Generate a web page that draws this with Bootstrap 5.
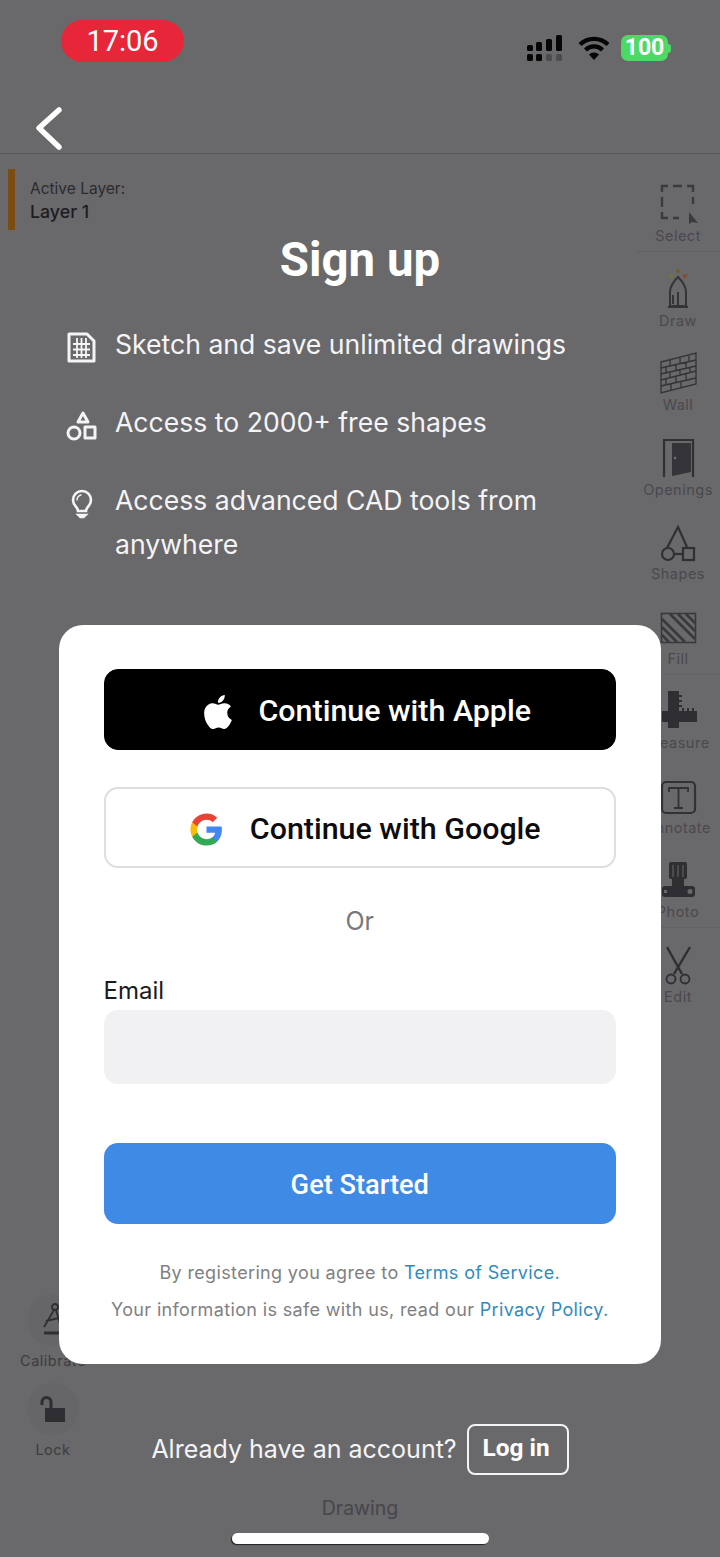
<!DOCTYPE html>
<html lang="en">
<head>
    <meta charset="UTF-8">
    <meta name="viewport" content="width=device-width, initial-scale=1.0">
    <title>Sign up</title>
    <link href="https://cdn.jsdelivr.net/npm/bootstrap@5.3.0/dist/css/bootstrap.min.css" rel="stylesheet">
    <style>
        body {
            margin: 0;
            background: #69686b;
            font-family: Inter, "Liberation Sans", sans-serif;
        }
        .phone-screen {
            position: relative;
            width: 720px;
            height: 1557px;
            overflow: hidden;
            background: #69686b;
        }
        /* dimmed app behind the sign up sheet */
        .app-layer {
            position: absolute;
            inset: 0;
        }
        .status-row {
            height: 154px;
            border-bottom: 1px solid #57565a;
        }
        .time-pill {
            position: absolute;
            left: 61px;
            top: 20px;
            width: 123px;
            height: 42px;
            border-radius: 21px;
            background: #e8263a;
            color: #fff;
            font: 400 29px/43px Roboto, sans-serif;
            text-align: center;
        }
        .status-icons {
            position: absolute;
            left: 526px;
            top: 34px;
        }
        .wifi-icon {
            margin-left: 14px;
        }
        .battery-chip {
            width: 47px;
            height: 26px;
            margin-left: 11px;
            border-radius: 7px;
            background: #4cd964;
            color: #fff;
            font: 700 23px/26px Roboto, sans-serif;
            text-align: center;
        }
        .battery-tip {
            width: 3px;
            height: 9px;
            background: #4cd964;
            border-radius: 0 3px 3px 0;
        }
        .back-arrow {
            position: absolute;
            left: 32px;
            top: 103px;
        }
        .layer-tag {
            position: absolute;
            left: 8px;
            top: 169px;
            height: 61px;
            border-left: 7px solid #7b4d13;
            padding: 8px 0 0 15px;
            color: #2c2b2e;
            font-size: 15.500px;
            line-height: 23px;
        }
        .layer-tag b {
            font-weight: 500;
            font-size: 17.800px;
            color: #1d1c1f;
        }
        .tool-rail {
            position: absolute;
            right: 0;
            top: 183px;
            width: 84px;
        }
        .tool-item {
            height: 84.500px;
            color: #4a494d;
            font-size: 14.500px;
            line-height: 18px;
            letter-spacing: .5px;
            text-align: center;
        }
        .tool-item svg {
            display: block;
            margin: 0 auto 2px;
        }
        .rail-line {
            position: absolute;
            left: 636px;
            right: 0;
            border-top: 1px solid #626165;
        }
        .rail-line-a { top: 251px; }
        .rail-line-b { top: 674px; }
        .rail-line-c { top: 927px; }
        .side-tool {
            position: absolute;
            left: 0;
            width: 106px;
            color: #3d3c40;
            font-size: 14.500px;
            letter-spacing: .5px;
            line-height: 18px;
            text-align: center;
        }
        .side-calibrate { top: 1294px; }
        .side-lock { top: 1383px; }
        .side-circle {
            width: 52px;
            height: 52px;
            margin: 0 auto 6px;
            border-radius: 50%;
            background: #666568;
        }
        .mode-label {
            position: absolute;
            left: 0;
            right: 0;
            top: 1496px;
            color: #47464a;
            font-size: 19.500px;
            line-height: 24px;
            text-align: center;
        }
        .home-bar {
            position: absolute;
            left: 232px;
            top: 1533px;
            width: 257px;
            height: 11px;
            border-radius: 6px;
            background: #fff;
            box-shadow: -1px 1px 1px #222;
        }
        /* sign up sheet */
        .signup-layer {
            position: absolute;
            inset: 0;
            padding-top: 230px;
        }
        .signup-title {
            margin: 0 0 32px;
            color: #fff;
            font: 700 47.400px/60px Roboto, sans-serif;
            text-align: center;
        }
        .perk-list {
            margin: 0 0 59px;
            padding: 0 66px;
            list-style: none;
            color: #f4f4f5;
            font-size: 26.600px;
            line-height: 44px;
        }
        .perk-list li {
            display: flex;
            margin-bottom: 34px;
        }
        .perk-list li:last-child {
            margin-bottom: 0;
        }
        .perk-icon {
            flex: 0 0 49px;
            height: 44px;
            padding-top: 1px;
        }
        .sheet-card {
            width: 602px;
            height: 739px;
            margin: 0 auto;
            padding: 44px 45px 0 44.500px;
            border: 0;
            border-radius: 24px;
        }
        .oauth-btn {
            height: 81px;
            padding-top: 10px;
            border-radius: 14px;
            font: 500 30.400px/1 Roboto, sans-serif;
        }
        .apple-btn {
            margin-bottom: 37px;
            background: #000;
            border-color: #000;
            color: #fff;
            gap: 24px;
            padding-left: 24px;
        }
        .google-btn {
            background: #fff;
            border: 2px solid #dedee0;
            color: #0c0c0e;
            gap: 26px;
            padding-left: 22px;
        }
        .or-text {
            margin-top: 38px;
            color: #77767a;
            font-size: 25px;
            line-height: 30px;
            text-align: center;
        }
        .email-label {
            margin: 39px 0 5px;
            padding-top: 1px;
            height: 30px;
            color: #1b1b1d;
            font-size: 24px;
            line-height: 30px;
        }
        .email-input {
            height: 74px;
            border: 0;
            border-radius: 14px;
            background: #f1f1f3;
        }
        .start-btn {
            width: 100%;
            height: 81px;
            margin-top: 59px;
            padding-top: 10px;
            border: 0;
            border-radius: 14px;
            background: #3f8ae4;
            color: #fff;
            font: 500 27.200px/1 Roboto, sans-serif;
        }
        .legal-text {
            margin-top: 30px;
            color: #808084;
            font-size: 18px;
            line-height: 37px;
            letter-spacing: .35px;
            text-align: center;
            white-space: nowrap;
        }
        .legal-text a {
            color: #2f8bbf;
            text-decoration: none;
        }
        .login-row {
            margin-top: 60px;
            height: 51px;
            color: #f4f4f5;
            font-size: 25px;
            gap: 10px;
        }
        .login-btn {
            width: 102px;
            height: 51px;
            padding: 0 3px 2px 0;
            border: 2px solid #f4f4f5;
            border-radius: 8px;
            color: #fff;
            font: 700 24.400px/1 Roboto, sans-serif;
        }
    </style>
</head>
<body>
    <div class="phone-screen">
        <div class="app-layer">
            <div class="status-row"></div>
            <div class="time-pill">17:06</div>
            <div class="status-icons d-flex align-items-center">
                <svg width="38" height="28" viewBox="0 0 38 28">
                    <g fill="#060606">
                        <rect x="1" y="11" width="6" height="6" rx="1.5"/><rect x="10" y="8" width="6" height="9" rx="1.5"/><rect x="20" y="5" width="6" height="12" rx="1.5"/><rect x="30" y="1" width="6" height="16" rx="1.5"/>
                        <rect x="1" y="20" width="6" height="7" rx="1.5"/><rect x="10" y="20" width="6" height="7" rx="1.5"/>
                    </g>
                    <g fill="#4c4b4e"><rect x="20" y="20" width="6" height="7" rx="1.5"/><rect x="30" y="20" width="6" height="7" rx="1.5"/></g>
                </svg>
                <svg class="wifi-icon" width="32" height="26" viewBox="0 0 32 26" fill="none" stroke="#050505" stroke-width="4.2">
                    <path d="M2 9.500a20 20 0 0 1 28 0"/><path d="M7.500 15a12 12 0 0 1 17 0"/>
                    <path d="M16 25l-5-5.500a7 7 0 0 1 10 0z" fill="#050505" stroke="none"/>
                </svg>
                <div class="battery-chip">100</div>
                <div class="battery-tip"></div>
            </div>
            <svg class="back-arrow" width="34" height="50" viewBox="0 0 34 50" fill="none" stroke="#fff" stroke-width="5.500" stroke-linecap="round" stroke-linejoin="round">
                <path d="M27 7L7 25l20 19"/>
            </svg>
            <div class="layer-tag">Active Layer:<br><b>Layer 1</b></div>

            <div class="rail-line rail-line-a"></div>
            <div class="rail-line rail-line-b"></div>
            <div class="rail-line rail-line-c"></div>
            <div class="tool-rail">
                <div class="tool-item">
                    <svg width="40" height="42" viewBox="0 0 40 42" fill="none" stroke="#3b3a3e" stroke-width="2.4">
                        <path d="M4 9V3h6M15 3h9M29 3h6v6M4 14v10M35 14v7M4 29v6h6M15 35h6"/>
                        <path d="M31 29l9 11-6-1-3 2z" fill="#3b3a3e" stroke="none"/>
                    </svg>
                    Select
                </div>
                <div class="tool-item">
                    <svg width="40" height="42" viewBox="0 0 40 42" fill="none" stroke="#343337" stroke-width="2">
                        <path d="M12 38V24c0-6 4-11 8-15 4 4 8 9 8 15v14zM10 39h20M20 24v14M15 27v9"/>
                        <circle cx="20" cy="3" r="2" fill="#7a5a28" stroke="none"/>
                        <path d="M10 6l6 1-3 4z" fill="#6b7a35" stroke="none"/><path d="M30 6l-6 1 3 4z" fill="#8a4a30" stroke="none"/>
                    </svg>
                    Draw
                </div>
                <div class="tool-item">
                    <svg width="40" height="42" viewBox="0 0 40 42" fill="none" stroke="#343337" stroke-width="1.3">
                        <path d="M3 10L38 1v31L3 41z"/>
                        <path d="M3 16l35-8M3 22l35-8M3 28l35-9M3 34l35-8M12 8v6M22 6v5M31 4v5M8 15v6M18 13v6M28 10v6M12 20v6M22 18v6M32 15v6M8 27v6M18 25v6M28 22v6M13 32v6M23 30v6"/>
                    </svg>
                    Wall
                </div>
                <div class="tool-item">
                    <svg width="40" height="42" viewBox="0 0 40 42" fill="none" stroke="#303033" stroke-width="2.2">
                        <path d="M6 40V3h29v37"/>
                        <path d="M14 6h19v29l-19 4z" fill="#353438" stroke="none"/>
                        <circle cx="17" cy="21" r="1.2" fill="#77767a" stroke="none"/>
                    </svg>
                    Openings
                </div>
                <div class="tool-item">
                    <svg width="40" height="42" viewBox="0 0 40 42" fill="none" stroke="#303033" stroke-width="2.2">
                        <path d="M9 27L20 6l9 20"/><circle cx="10" cy="33" r="6"/><rect x="25" y="27" width="11" height="12"/><path d="M16 33h9"/>
                    </svg>
                    Shapes
                </div>
                <div class="tool-item">
                    <svg width="40" height="42" viewBox="0 0 40 42" fill="none" stroke="#39383c">
                        <rect x="3.500" y="7.500" width="34" height="29" stroke-width="1.6"/>
                        <path stroke-width="2.6" d="M4 13l23 23M4 21l15 15M4 29l7 7M12 8l25 25M20 8l17 17M28 8l9 9"/>
                    </svg>
                    Fill
                </div>
                <div class="tool-item">
                    <svg width="40" height="42" viewBox="0 0 40 42" fill="#2f2e32">
                        <path d="M10 1h11v20h18v11H21v6H10v-6H4V21h6z"/>
                        <path d="M21 5h3v2h-3zM21 10h3v2h-3zM21 15h3v2h-3zM24 18h2v3h-2zM29 18h2v3h-2zM34 18h2v3h-2z"/>
                    </svg>
                    Measure
                </div>
                <div class="tool-item">
                    <svg width="40" height="42" viewBox="0 0 40 42" fill="none" stroke="#323135">
                        <rect x="4" y="7" width="33" height="31" rx="4" stroke-width="2.2"/>
                        <path stroke-width="1.8" d="M11 17v-4h19v4M20.500 13v20M16 33h9"/>
                    </svg>
                    Annotate
                </div>
                <div class="tool-item">
                    <svg width="40" height="42" viewBox="0 0 40 42" fill="#2f2e32">
                        <rect x="11" y="3" width="18" height="17" rx="2"/>
                        <path d="M15 6v12M20 6v12M25 6v12" stroke="#69686b" stroke-width="1"/>
                        <path d="M14 20h12v7h8a3 3 0 0 1 3 3v5a3 3 0 0 1-3 3H7a3 3 0 0 1-3-3v-5a3 3 0 0 1 3-3h7z"/>
                        <circle cx="32" cy="32.500" r="2.500" fill="#69686b"/>
                        <rect x="6" y="31" width="3" height="3" fill="#69686b"/>
                    </svg>
                    Photo
                </div>
                <div class="tool-item">
                    <svg width="40" height="42" viewBox="0 0 40 42" fill="none" stroke="#2f2e32" stroke-width="1.8">
                        <path d="M9 3l15 27M32 3L16 30" stroke-width="2.4"/><circle cx="13" cy="35" r="4.500"/><circle cx="27" cy="35" r="4.500"/>
                    </svg>
                    Edit
                </div>
            </div>

            <div class="side-tool side-calibrate">
                <div class="side-circle d-flex align-items-center justify-content-center">
                    <svg width="24" height="36" viewBox="0 0 24 36" fill="none" stroke="#2f2e32" stroke-width="1.8">
                        <circle cx="14" cy="5" r="3"/><path d="M13 8L3 25M15 8l5 17M5 19l17-4"/><path d="M3 31h15" stroke-width="3"/>
                    </svg>
                </div>
                Calibrate
            </div>
            <div class="side-tool side-lock">
                <div class="side-circle d-flex align-items-center justify-content-center">
                    <svg width="26" height="28" viewBox="0 0 26 28" fill="none">
                        <path d="M2 10V7a4.500 4.500 0 0 1 9 0v6" stroke="#2f2e32" stroke-width="3"/>
                        <rect x="5" y="13" width="20" height="14" fill="#2f2e32"/>
                    </svg>
                </div>
                Lock
            </div>
            <div class="mode-label">Drawing</div>
        </div>

        <div class="signup-layer">
            <h1 class="signup-title">Sign up</h1>
            <ul class="perk-list">
                <li>
                    <span class="perk-icon">
                        <svg width="32" height="44" viewBox="0 0 32 44" fill="none" stroke="#f4f4f5" stroke-width="3" stroke-linejoin="round">
                            <path d="M3 8h18l7 7v20H3z"/>
                            <path stroke-width="1.8" d="M7 18h17M7 23.500h17M7 29h17M11 12v20M15.500 12v20M20 12v20"/>
                        </svg>
                    </span>
                    <span>Sketch and save unlimited drawings</span>
                </li>
                <li>
                    <span class="perk-icon">
                        <svg width="32" height="44" viewBox="0 0 32 44" fill="none" stroke="#f4f4f5" stroke-width="3" stroke-linejoin="round">
                            <path d="M17 9l5 9H12z"/><circle cx="8" cy="29" r="6"/><rect x="19" y="23" width="10" height="11"/>
                        </svg>
                    </span>
                    <span>Access to 2000+ free shapes</span>
                </li>
                <li>
                    <span class="perk-icon">
                        <svg width="32" height="44" viewBox="0 0 32 44" fill="none" stroke="#f4f4f5" stroke-width="2.6" stroke-linecap="round">
                            <path d="M12 29c0-4-5-5-5-11a9 9 0 0 1 18 0c0 6-5 7-5 11z"/>
                            <path d="M11 18a5.500 5.500 0 0 1 4-5" stroke-width="1.4"/>
                            <path d="M12.500 33h7l-2 2h-3z" fill="#f4f4f5"/>
                        </svg>
                    </span>
                    <span>Access advanced CAD tools from anywhere</span>
                </li>
            </ul>

            <div class="card sheet-card">
                <button type="button" class="btn oauth-btn apple-btn w-100 d-flex align-items-center justify-content-center">
                    <svg width="34" height="34" viewBox="0 0 24 24" fill="#fff">
                        <path d="M12.152 6.896c-.948 0-2.415-1.078-3.96-1.04-2.04.027-3.91 1.183-4.961 3.014-2.117 3.675-.546 9.103 1.519 12.09 1.013 1.454 2.208 3.09 3.792 3.039 1.52-.065 2.09-.987 3.935-.987 1.831 0 2.35.987 3.96.948 1.637-.026 2.676-1.48 3.676-2.948 1.156-1.688 1.636-3.325 1.662-3.415-.039-.013-3.182-1.221-3.22-4.857-.026-3.04 2.48-4.494 2.597-4.559-1.429-2.09-3.623-2.324-4.39-2.376-2-.156-3.675 1.09-4.61 1.09zM15.530 3.830c.843-1.012 1.400-2.427 1.245-3.830-1.207.052-2.662.805-3.532 1.818-.780.896-1.454 2.338-1.273 3.714 1.338.104 2.715-.688 3.559-1.701"/>
                    </svg>
                    <span>Continue with Apple</span>
                </button>
                <button type="button" class="btn oauth-btn google-btn w-100 d-flex align-items-center justify-content-center">
                    <svg width="35" height="35" viewBox="0 0 24 24">
                        <path fill="#4285F4" d="M22.56 12.25c0-.78-.07-1.53-.2-2.25H12v4.26h5.92c-.26 1.37-1.04 2.53-2.21 3.31v2.77h3.57c2.08-1.92 3.28-4.74 3.28-8.09z"/>
                        <path fill="#34A853" d="M12 23c2.97 0 5.46-.98 7.28-2.66l-3.57-2.77c-.98.66-2.23 1.06-3.71 1.06-2.86 0-5.29-1.93-6.16-4.53H2.18v2.84C3.99 20.53 7.7 23 12 23z"/>
                        <path fill="#FBBC05" d="M5.84 14.09c-.22-.66-.35-1.36-.35-2.09s.13-1.43.35-2.09V7.07H2.18C1.43 8.55 1 10.22 1 12s.43 3.45 1.18 4.93l3.66-2.84z"/>
                        <path fill="#EA4335" d="M12 5.38c1.62 0 3.06.56 4.21 1.64l3.15-3.15C17.45 2.09 14.97 1 12 1 7.7 1 3.99 3.47 2.18 7.07l3.66 2.84c.87-2.6 3.3-4.53 6.16-4.53z"/>
                    </svg>
                    <span>Continue with Google</span>
                </button>
                <div class="or-text">Or</div>
                <label class="form-label d-block email-label" for="email">Email</label>
                <input type="email" id="email" class="form-control email-input">
                <button type="button" class="btn start-btn">Get Started</button>
                <div class="legal-text">
                    By registering you agree to <a href="#">Terms of Service.</a><br>
                    Your information is safe with us, read our <a href="#">Privacy Policy.</a>
                </div>
            </div>

            <div class="login-row d-flex align-items-center justify-content-center">
                <span>Already have an account?</span>
                <button type="button" class="btn login-btn">Log in</button>
            </div>
        </div>

        <div class="home-bar"></div>
    </div>
    <script src="https://cdn.jsdelivr.net/npm/bootstrap@5.3.0/dist/js/bootstrap.bundle.min.js"></script>
</body>
</html>
